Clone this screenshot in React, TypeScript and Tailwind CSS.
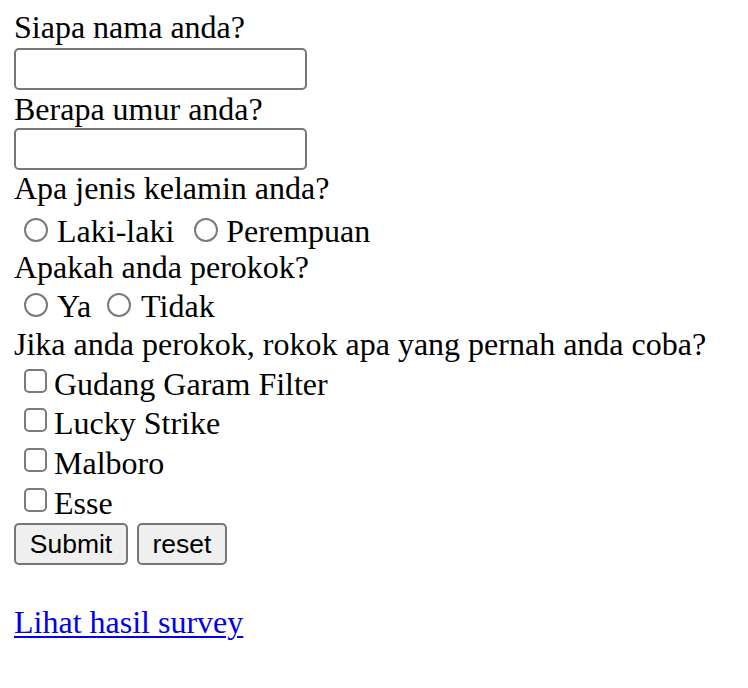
import React from "react";

function Radio({ name }: { name: string }) {
  return (
    <input
      type="radio"
      name={name}
      className="appearance-none m-0 w-[24px] h-[24px] shrink-0 rounded-full border-[2px] border-[#7a7a7a] bg-white"
    />
  );
}

function Check() {
  return (
    <input
      type="checkbox"
      className="appearance-none m-0 mt-[1px] w-[23px] h-[24px] shrink-0 rounded-[5px] border-[2px] border-[#7a7a7a] bg-white"
    />
  );
}

export default function App() {
  return (
    <div className="min-h-[688px] bg-white pl-[14px] pt-[11px] font-['Liberation_Serif',serif] text-[32px] leading-[32px] text-black">
      <div>Siapa nama anda?</div>
      <div className="h-[49px] pt-[5px]">
        <input
          type="text"
          className="block w-[293px] h-[42px] rounded-[5px] border-[2px] border-[#767676] bg-white outline-none"
        />
      </div>
      <div className="mt-[1px]">Berapa umur anda?</div>
      <div className="h-[47px] pt-[3px]">
        <input
          type="text"
          className="block w-[293px] h-[42px] rounded-[5px] border-[2px] border-[#767676] bg-white outline-none"
        />
      </div>
      <div>Apa jenis kelamin anda?</div>
      <div className="mt-[11px] flex items-start h-[32px] pl-[10px]">
        <span className="mt-[3px] flex">
          <Radio name="jk" />
        </span>
        <span className="ml-[9px]">Laki-laki</span>
        <span className="ml-[20px] mt-[3px] flex">
          <Radio name="jk" />
        </span>
        <span className="ml-[8px]">Perempuan</span>
      </div>
      <div className="mt-[4px]">Apakah anda perokok?</div>
      <div className="mt-[7px] flex items-start h-[32px] pl-[10px]">
        <span className="mt-[3px] flex">
          <Radio name="rokok" />
        </span>
        <span className="ml-[9px]">Ya</span>
        <span className="ml-[16px] mt-[3px] flex">
          <Radio name="rokok" />
        </span>
        <span className="ml-[10px]">Tidak</span>
      </div>
      <div className="mt-[6px]">Jika anda perokok, rokok apa yang pernah anda coba?</div>
      <div className="mt-[8px] flex items-start h-[32px] pl-[10px]">
        <Check />
        <span className="ml-[7px]">Gudang Garam Filter</span>
      </div>
      <div className="mt-[7px] flex items-start h-[32px] pl-[10px]">
        <Check />
        <span className="ml-[7px]">Lucky Strike</span>
      </div>
      <div className="mt-[8px] flex items-start h-[32px] pl-[10px]">
        <Check />
        <span className="ml-[7px]">Malboro</span>
      </div>
      <div className="mt-[8px] flex items-start h-[32px] pl-[10px]">
        <Check />
        <span className="ml-[7px]">Esse</span>
      </div>
      <div className="mt-[4px] flex gap-[9px] font-['Liberation_Sans',sans-serif] text-[26.5px]">
        <button className="w-[114px] h-[42px] rounded-[5px] border-[2px] border-[#767676] bg-[#efefef] text-black leading-none">
          Submit
        </button>
        <button className="w-[90px] h-[42px] rounded-[5px] border-[2px] border-[#767676] bg-[#efefef] text-black leading-none">
          reset
        </button>
      </div>
      <div className="mt-[41px]">
        <a href="#" className="text-[#0000ee] underline underline-offset-[3px] decoration-[2px]">
          Lihat hasil survey
        </a>
      </div>
    </div>
  );
}
